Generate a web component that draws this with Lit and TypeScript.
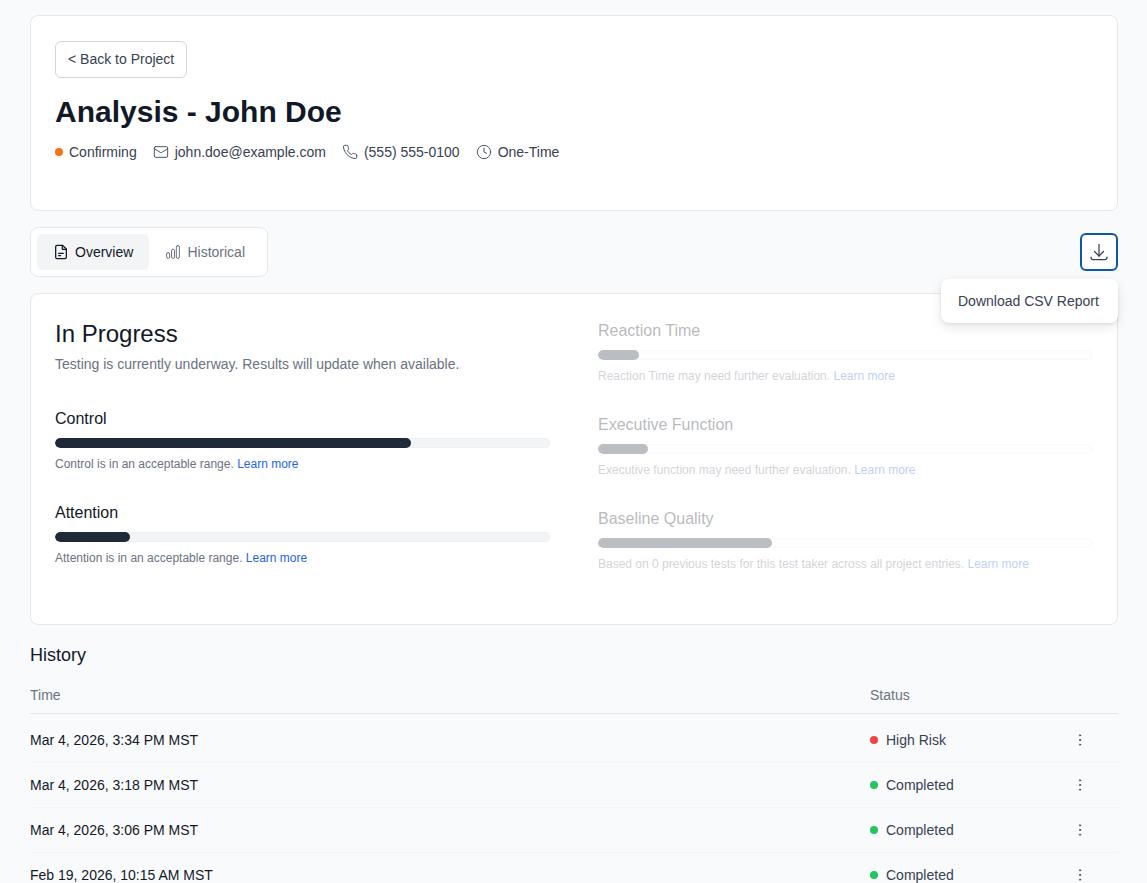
import { LitElement, html, css, svg } from "lit";
import { customElement } from "lit/decorators.js";

const metrics = [
  { name: "Control", pct: 72, text: "Control is in an acceptable range." },
  { name: "Attention", pct: 15.2, text: "Attention is in an acceptable range." },
];
const dim = [
  { name: "Reaction Time", pct: 8.2, text: "Reaction Time may need further evaluation." },
  { name: "Executive Function", pct: 10.2, text: "Executive function may need further evaluation." },
  { name: "Baseline Quality", pct: 35.2, text: "Based on 0 previous tests for this test taker across all project entries." },
];
const rows = [
  { t: "Mar 4, 2026, 3:34 PM MST", s: "High Risk", c: "red" },
  { t: "Mar 4, 2026, 3:18 PM MST", s: "Completed", c: "green" },
  { t: "Mar 4, 2026, 3:06 PM MST", s: "Completed", c: "green" },
  { t: "Feb 19, 2026, 10:15 AM MST", s: "Completed", c: "green" },
];

const icon = (body: unknown, size = 16, sw = 1.5, box = 24) => html`<svg class="ico" width=${size} height=${size} viewBox="0 0 ${box} ${box}" fill="none" stroke="currentColor" stroke-width=${sw} stroke-linecap="round" stroke-linejoin="round">${body}</svg>`;

@customElement("app-root")
export class AppRoot extends LitElement {
  static styles = css`
    :host { display: block; height: 883px; overflow: hidden; background: #f9fafb; font-family: "Liberation Sans", Arial, sans-serif; color: #111827; }
    * { box-sizing: border-box; }
    .page { padding: 15px 29px 0 30px; display: flex; flex-direction: column; }
    .card { background: #fff; border: 1px solid #e5e7eb; border-radius: 8px; }
    .head { height: 196px; padding: 25px 24px; }
    .back { display: inline-flex; align-items: center; height: 37px; padding: 0 12px 2px; border: 1px solid #d1d5db; border-radius: 6px; font-size: 14px; color: #374151; background: #fff; }
    h1 { margin: 16px 0 0; font-size: 30px; line-height: 36px; font-weight: 700; color: #111827; }
    .meta { display: flex; gap: 16px; margin-top: 12px; font-size: 14px; line-height: 20px; color: #374151; }
    .meta span { display: flex; align-items: center; gap: 6px; }
    .ico { display: block; flex: none; }
    .meta .ico { color: #4b5563; }
    .dot { width: 8px; height: 8px; border-radius: 50%; flex: none; }
    .orange { background: #f97316; }
    .red { background: #ef4444; }
    .green { background: #22c55e; }
    .bar-row { display: flex; justify-content: space-between; align-items: center; margin-top: 16px; position: relative; }
    .tabs { display: flex; height: 50px; padding: 6px; width: 238px; background: #fff; border: 1px solid #e5e7eb; border-radius: 8px; }
    .tab { display: flex; align-items: center; gap: 6px; height: 36px; padding: 0 16px; border-radius: 6px; font-size: 14px; color: #6b7280; }
    .tab.on { width: 113px; background: #f3f4f6; color: #111827; }
    .dl { display: flex; align-items: center; justify-content: center; width: 38px; height: 38px; background: #fff; border: 2px solid #0b57a8; border-radius: 6px; color: #374151; }
    .menu { position: absolute; z-index: 5; right: 0; top: 52px; width: 177px; height: 44px; display: flex; align-items: center; padding: 0 17px; background: #fff; border-radius: 8px; font-size: 14px; color: #374151; box-shadow: 0 4px 12px rgba(0,0,0,.1), 0 1px 3px rgba(0,0,0,.08); white-space: nowrap; }
    .main { display: grid; grid-template-columns: 1fr 1fr; column-gap: 48px; height: 332px; margin-top: 16px; padding: 24px; }
    h2 { margin: 0; font-size: 24px; line-height: 32px; font-weight: 400; color: #111827; }
    .sub { margin: 4px 0 0; font-size: 14px; line-height: 20px; color: #6b7280; }
    .metrics { display: flex; flex-direction: column; gap: 29px; margin-top: 33px; }
    .faded { display: flex; flex-direction: column; gap: 29px; opacity: .3; padding-top: 1px; }
    .faded .track { background: #f9fafb; }
    .m-name { font-size: 16px; line-height: 24px; color: #111827; }
    .track { height: 10px; margin-top: 7px; background: #f3f4f6; border-radius: 5px; box-shadow: inset 0 0 0 1px #eceef1; overflow: hidden; }
    .fill { height: 100%; background: #1f2937; border-radius: 5px; }
    .m-text { margin-top: 8px; font-size: 12px; line-height: 16px; color: #6b7280; white-space: nowrap; }
    .m-text a { color: #2563eb; }
    h3 { margin: 18px 0 0; font-size: 18px; line-height: 24px; font-weight: 400; color: #111827; }
    .row { display: grid; grid-template-columns: 840px 1fr 46px; align-items: center; height: 45px; font-size: 14px; border-bottom: 1px solid #f3f4f6; color: #111827; }
    .row.first { height: 49px; padding-top: 3px; }
    .row.th { height: 47px; padding-top: 10px; border-bottom: 1px solid #e5e7eb; color: #6b7280; }
    .status { display: flex; align-items: center; gap: 8px; color: #374151; }
    .more { color: #4b5563; }
  `;

  private metric(m: { name: string; pct: number; text: string }) {
    return html`<div>
      <div class="m-name">${m.name}</div>
      <div class="track"><div class="fill" style="width:${m.pct}%"></div></div>
      <div class="m-text">${m.text} <a>Learn more</a></div>
    </div>`;
  }

  render() {
    return html`<div class="page">
      <section class="card head">
        <div class="back">&lt; Back to Project</div>
        <h1>Analysis - John Doe</h1>
        <div class="meta">
          <span><i class="dot orange"></i>Confirming</span>
          <span>${icon(svg`<rect x="2" y="4" width="20" height="16" rx="2"/><path d="m22 7-8.97 5.7a1.94 1.94 0 0 1-2.06 0L2 7"/>`)}john.doe@example.com</span>
          <span>${icon(svg`<path d="M22 16.92v3a2 2 0 0 1-2.18 2 19.79 19.79 0 0 1-8.63-3.07 19.5 19.5 0 0 1-6-6 19.79 19.79 0 0 1-3.07-8.67A2 2 0 0 1 4.11 2h3a2 2 0 0 1 2 1.72 12.84 12.84 0 0 0 .7 2.81 2 2 0 0 1-.45 2.11L8.09 9.91a16 16 0 0 0 6 6l1.27-1.27a2 2 0 0 1 2.11-.45 12.84 12.84 0 0 0 2.81.7A2 2 0 0 1 22 16.92z"/>`)}(555) 555-0100</span>
          <span>${icon(svg`<circle cx="12" cy="12" r="10"/><path d="M12 6v6l4 2"/>`)}One-Time</span>
        </div>
      </section>
      <div class="bar-row">
        <div class="tabs">
          <div class="tab on">${icon(svg`<path d="M14.5 2H6a2 2 0 0 0-2 2v16a2 2 0 0 0 2 2h12a2 2 0 0 0 2-2V7.5z"/><path d="M14 2v6h6"/><path d="M8.5 14h7M8.5 17.5h3"/>`, 16, 1.9)}Overview</div>
          <div class="tab">${icon(svg`<rect x="2.5" y="13" width="4.5" height="8.5" rx="2"/><rect x="9.75" y="8" width="4.5" height="13.5" rx="2"/><rect x="17" y="2.5" width="4.5" height="19" rx="2"/>`)}Historical</div>
        </div>
        <div class="dl">${icon(svg`<path d="M10 2.5v11.5"/><path d="m5.5 9.5 4.5 4.5 4.5-4.5"/><path d="M2 15v.6a1.9 1.9 0 0 0 1.9 1.9h12.2a1.9 1.9 0 0 0 1.9-1.9V15"/>`, 20, 1.25, 20)}</div>
        <div class="menu">Download CSV Report</div>
      </div>
      <section class="card main">
        <div>
          <h2>In Progress</h2>
          <p class="sub">Testing is currently underway. Results will update when available.</p>
          <div class="metrics">${metrics.map((m) => this.metric(m))}</div>
        </div>
        <div class="faded">${dim.map((m) => this.metric(m))}</div>
      </section>
      <h3>History</h3>
      <div class="row th"><div>Time</div><div>Status</div><div></div></div>
      ${rows.map((r, i) => html`<div class="row ${i === 0 ? "first" : ""}">
        <div>${r.t}</div>
        <div class="status"><i class="dot ${r.c}"></i>${r.s}</div>
        <div class="more">${icon(svg`<circle cx="12" cy="5" r="1"/><circle cx="12" cy="12" r="1"/><circle cx="12" cy="19" r="1"/>`)}</div>
      </div>`)}
    </div>`;
  }
}
